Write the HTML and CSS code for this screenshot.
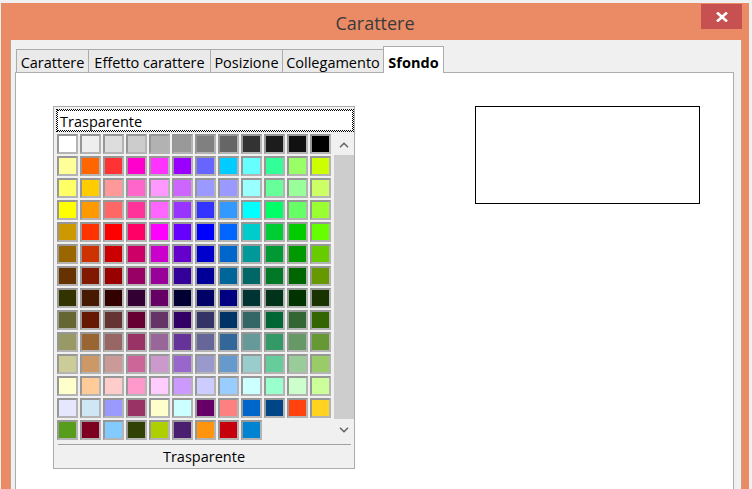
FILE: index.html
```html
<!DOCTYPE html>
<html lang="it">
<head>
<meta charset="utf-8">
<title>Carattere</title>
<link rel="stylesheet" href="styles.css">
</head>
<body>
<div class="window">
  <div class="titlebar">
    <div class="title">Carattere</div>
    <div class="close" role="button" aria-label="Chiudi">
      <svg width="12" height="10" viewBox="0 0 12 10"><path d="M1 0.5 L11 9.5 M11 0.5 L1 9.5" stroke="#fff" stroke-width="2.6" fill="none"/></svg>
    </div>
  </div>
  <div class="panel">
    <div class="tabs">
      <div class="tab t1">Carattere</div>
      <div class="tab t2">Effetto carattere</div>
      <div class="tab t3">Posizione</div>
      <div class="tab t4">Collegamento</div>
      <div class="tab active">Sfondo</div>
    </div>
    <div class="page">
      <div class="picker">
        <div class="field">Trasparente</div>
        <div class="pbody">
          <div class="grid">
            <span class="sw" style="background:#FFFFFF"></span><span class="sw" style="background:#EEEEEE"></span><span class="sw" style="background:#DDDDDD"></span><span class="sw" style="background:#CCCCCC"></span><span class="sw" style="background:#B2B2B2"></span><span class="sw" style="background:#999999"></span><span class="sw" style="background:#808080"></span><span class="sw" style="background:#666666"></span><span class="sw" style="background:#333333"></span><span class="sw" style="background:#1C1C1C"></span><span class="sw" style="background:#111111"></span><span class="sw" style="background:#000000"></span>
            <span class="sw" style="background:#FFFF99"></span><span class="sw" style="background:#FF6600"></span><span class="sw" style="background:#FF3333"></span><span class="sw" style="background:#FF00CC"></span><span class="sw" style="background:#FF33FF"></span><span class="sw" style="background:#9900FF"></span><span class="sw" style="background:#6666FF"></span><span class="sw" style="background:#00CCFF"></span><span class="sw" style="background:#66FFFF"></span><span class="sw" style="background:#33FF99"></span><span class="sw" style="background:#99FF66"></span><span class="sw" style="background:#CCFF00"></span>
            <span class="sw" style="background:#FFFF66"></span><span class="sw" style="background:#FFCC00"></span><span class="sw" style="background:#FF9999"></span><span class="sw" style="background:#FF66CC"></span><span class="sw" style="background:#FF99FF"></span><span class="sw" style="background:#CC66FF"></span><span class="sw" style="background:#9999FF"></span><span class="sw" style="background:#9999FF"></span><span class="sw" style="background:#99FFFF"></span><span class="sw" style="background:#66FF99"></span><span class="sw" style="background:#99FF99"></span><span class="sw" style="background:#CCFF66"></span>
            <span class="sw" style="background:#FFFF00"></span><span class="sw" style="background:#FF9900"></span><span class="sw" style="background:#FF6666"></span><span class="sw" style="background:#FF3399"></span><span class="sw" style="background:#FF66FF"></span><span class="sw" style="background:#9933FF"></span><span class="sw" style="background:#3333FF"></span><span class="sw" style="background:#3399FF"></span><span class="sw" style="background:#00FFFF"></span><span class="sw" style="background:#00FF66"></span><span class="sw" style="background:#66FF66"></span><span class="sw" style="background:#99FF33"></span>
            <span class="sw" style="background:#CC9900"></span><span class="sw" style="background:#FF3300"></span><span class="sw" style="background:#FF0000"></span><span class="sw" style="background:#FF0066"></span><span class="sw" style="background:#FF00FF"></span><span class="sw" style="background:#6600FF"></span><span class="sw" style="background:#0000FF"></span><span class="sw" style="background:#0066FF"></span><span class="sw" style="background:#00CCCC"></span><span class="sw" style="background:#00CC33"></span><span class="sw" style="background:#00CC00"></span><span class="sw" style="background:#66FF00"></span>
            <span class="sw" style="background:#996600"></span><span class="sw" style="background:#CC3300"></span><span class="sw" style="background:#CC0000"></span><span class="sw" style="background:#CC0066"></span><span class="sw" style="background:#CC00CC"></span><span class="sw" style="background:#6600CC"></span><span class="sw" style="background:#0000CC"></span><span class="sw" style="background:#0066CC"></span><span class="sw" style="background:#009999"></span><span class="sw" style="background:#009933"></span><span class="sw" style="background:#009900"></span><span class="sw" style="background:#66CC00"></span>
            <span class="sw" style="background:#663300"></span><span class="sw" style="background:#801900"></span><span class="sw" style="background:#990000"></span><span class="sw" style="background:#990066"></span><span class="sw" style="background:#990099"></span><span class="sw" style="background:#330099"></span><span class="sw" style="background:#000099"></span><span class="sw" style="background:#006699"></span><span class="sw" style="background:#006666"></span><span class="sw" style="background:#007826"></span><span class="sw" style="background:#006600"></span><span class="sw" style="background:#669900"></span>
            <span class="sw" style="background:#333300"></span><span class="sw" style="background:#461900"></span><span class="sw" style="background:#330000"></span><span class="sw" style="background:#330033"></span><span class="sw" style="background:#660066"></span><span class="sw" style="background:#000033"></span><span class="sw" style="background:#000066"></span><span class="sw" style="background:#000080"></span><span class="sw" style="background:#003333"></span><span class="sw" style="background:#00331A"></span><span class="sw" style="background:#003300"></span><span class="sw" style="background:#193300"></span>
            <span class="sw" style="background:#666633"></span><span class="sw" style="background:#661900"></span><span class="sw" style="background:#663333"></span><span class="sw" style="background:#660033"></span><span class="sw" style="background:#663366"></span><span class="sw" style="background:#330066"></span><span class="sw" style="background:#333366"></span><span class="sw" style="background:#003366"></span><span class="sw" style="background:#336666"></span><span class="sw" style="background:#006633"></span><span class="sw" style="background:#336633"></span><span class="sw" style="background:#336600"></span>
            <span class="sw" style="background:#999966"></span><span class="sw" style="background:#996633"></span><span class="sw" style="background:#996666"></span><span class="sw" style="background:#993366"></span><span class="sw" style="background:#996699"></span><span class="sw" style="background:#663399"></span><span class="sw" style="background:#666699"></span><span class="sw" style="background:#336699"></span><span class="sw" style="background:#669999"></span><span class="sw" style="background:#339966"></span><span class="sw" style="background:#669966"></span><span class="sw" style="background:#669933"></span>
            <span class="sw" style="background:#CCCC99"></span><span class="sw" style="background:#CC9966"></span><span class="sw" style="background:#CC9999"></span><span class="sw" style="background:#CC6699"></span><span class="sw" style="background:#CC99CC"></span><span class="sw" style="background:#9966CC"></span><span class="sw" style="background:#9999CC"></span><span class="sw" style="background:#6699CC"></span><span class="sw" style="background:#99CCCC"></span><span class="sw" style="background:#66CC99"></span><span class="sw" style="background:#99CC99"></span><span class="sw" style="background:#99CC66"></span>
            <span class="sw" style="background:#FFFFCC"></span><span class="sw" style="background:#FFCC99"></span><span class="sw" style="background:#FFCCCC"></span><span class="sw" style="background:#FF99CC"></span><span class="sw" style="background:#FFCCFF"></span><span class="sw" style="background:#CC99FF"></span><span class="sw" style="background:#CCCCFF"></span><span class="sw" style="background:#99CCFF"></span><span class="sw" style="background:#CCFFFF"></span><span class="sw" style="background:#99FFCC"></span><span class="sw" style="background:#CCFFCC"></span><span class="sw" style="background:#CCFF99"></span>
            <span class="sw" style="background:#E6E6FF"></span><span class="sw" style="background:#CFE7F5"></span><span class="sw" style="background:#9999FF"></span><span class="sw" style="background:#993366"></span><span class="sw" style="background:#FFFFCC"></span><span class="sw" style="background:#CCFFFF"></span><span class="sw" style="background:#660066"></span><span class="sw" style="background:#FF8080"></span><span class="sw" style="background:#0066CC"></span><span class="sw" style="background:#004586"></span><span class="sw" style="background:#FF420E"></span><span class="sw" style="background:#FFD320"></span>
            <span class="sw" style="background:#579D1C"></span><span class="sw" style="background:#7E0021"></span><span class="sw" style="background:#83CAFF"></span><span class="sw" style="background:#314004"></span><span class="sw" style="background:#AECF00"></span><span class="sw" style="background:#4B1F6F"></span><span class="sw" style="background:#FF950E"></span><span class="sw" style="background:#C5000B"></span><span class="sw" style="background:#0084D1"></span>
          </div>
          <div class="scrollbar">
            <div class="arrow"><svg width="10" height="6" viewBox="0 0 10 6"><path d="M1 5.2 L5 1.2 L9 5.2" stroke="#606060" stroke-width="1.5" fill="none"/></svg></div>
            <div class="track"></div>
            <div class="arrow"><svg width="10" height="6" viewBox="0 0 10 6"><path d="M1 0.8 L5 4.8 L9 0.8" stroke="#606060" stroke-width="1.5" fill="none"/></svg></div>
          </div>
        </div>
        <div class="sep"></div>
        <div class="label">Trasparente</div>
      </div>
      <div class="preview"></div>
    </div>
  </div>
</div>
</body>
</html>
```
FILE: styles.css
```css
html, body {
  margin: 0;
  padding: 0;
}
body {
  width: 752px;
  height: 489px;
  overflow: hidden;
  background: #f0f0f0;
  font-family: "Open Sans", "Noto Sans", sans-serif;
  color: #000;
}
.window {
  margin: 3px 0 0 1px;
  width: 748px;
  height: 486px;
  background: #ea8b66;
  display: flex;
  flex-direction: column;
  overflow: hidden;
}
.titlebar {
  position: relative;
  height: 37px;
  flex: none;
  display: flex;
  align-items: center;
  justify-content: center;
}
.title {
  font-size: 18px;
  color: #3a3a3a;
  line-height: 24px;
  padding-top: 2px;
}
.close {
  position: absolute;
  top: 1px;
  right: 7px;
  width: 41px;
  height: 25px;
  background: #c75050;
  display: flex;
  align-items: center;
  justify-content: center;
}
.panel {
  flex: 1;
  margin: 0 7px 0 9px;
  background: #f0f0f0;
  border-left: 1px solid #c99c86;
  border-right: 1px solid #c99c86;
  padding: 6px 7px 0 4px;
  display: flex;
  flex-direction: column;
  min-height: 0;
}
.tabs {
  display: flex;
  align-items: flex-end;
  height: 26px;
  padding-left: 1px;
  flex: none;
}
.tab {
  box-sizing: border-box;
  height: 23px;
  border: 1px solid #acacac;
  border-bottom: 0;
  background: #eaeaea;
  font-size: 14.5px;
  line-height: 21px;
  padding-top: 2px;
  text-align: center;
  white-space: nowrap;
  margin-left: -1px;
}
.tab.t1 { margin-left: 0; width: 73px; }
.tab.t2 { width: 123px; }
.tab.t3 { width: 73px; }
.tab.t4 { width: 102px; }
.tab.active {
  position: relative;
  z-index: 1;
  width: 61px;
  height: 27px;
  margin-bottom: -1px;
  background: #fff;
  font-weight: bold;
  padding-top: 5px;
}
.page {
  flex: 1;
  background: #fff;
  border: 1px solid #adadad;
  border-bottom: 0;
  display: flex;
  align-items: flex-start;
  padding: 33px 0 0 37px;
}
.picker {
  box-sizing: border-box;
  width: 302px;
  border: 1px solid #acacac;
  background: #f0f0f0;
  flex: none;
}
.field {
  box-sizing: border-box;
  margin: 2px 0 0 2px;
  width: 298px;
  height: 23px;
  background: #fff;
  border: 1px dotted #000;
  outline: 1px dotted #000;
  outline-offset: -2px;
  font-size: 14.5px;
  line-height: 21px;
  padding-top: 1px;
  padding-left: 3px;
  overflow: hidden;
}
.pbody {
  display: flex;
  margin-top: 2px;
}
.grid {
  margin-left: 3px;
  display: grid;
  grid-template-columns: repeat(12, 21px);
  grid-auto-rows: 20px;
  gap: 2px;
  height: 306px;
  align-content: start;
}
.sw {
  box-sizing: border-box;
  border: 2px solid;
  border-color: #979797 #b4b4b4 #b4b4b4 #979797;
}
.scrollbar {
  margin-left: 3px;
  width: 20px;
  height: 306px;
  display: flex;
  flex-direction: column;
}
.arrow {
  height: 21px;
  flex: none;
  background: #f0f0f0;
  display: flex;
  align-items: center;
  justify-content: center;
}
.track {
  flex: 1;
  background: #cdcdcd;
}
.sep {
  margin: 4px 3px 0 4px;
  height: 1px;
  background: #a0a0a0;
}
.label {
  height: 23px;
  line-height: 23px;
  text-align: center;
  font-size: 14.5px;
}
.preview {
  box-sizing: border-box;
  margin-left: 120px;
  width: 225px;
  height: 98px;
  border: 1px solid #000;
  flex: none;
}
```
